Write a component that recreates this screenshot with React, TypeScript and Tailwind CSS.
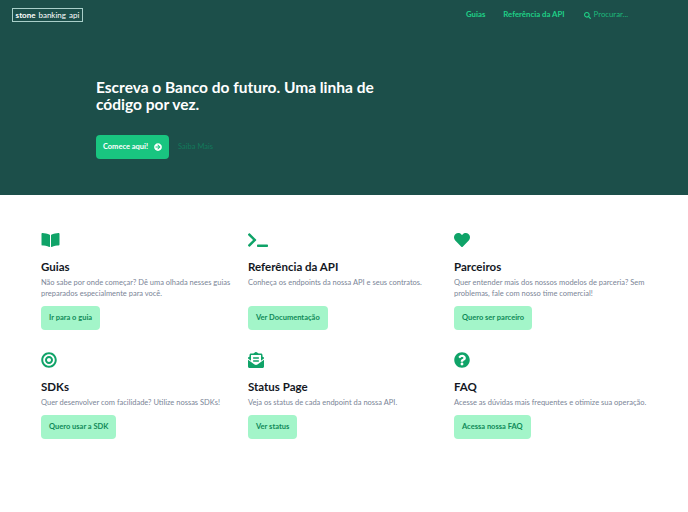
import {
  FaArrowCircleRight,
  FaBookOpen,
  FaBullseye,
  FaEnvelopeOpenText,
  FaHeart,
  FaQuestionCircle,
  FaSearch,
  FaTerminal,
} from "react-icons/fa";
import type { IconType } from "react-icons";

interface Card {
  icon: IconType;
  iconSize: string;
  title: string;
  text: string;
  action: string;
}

const topRow: Card[] = [
  {
    icon: FaBookOpen,
    iconSize: "w-[19px] h-[16px]",
    title: "Guias",
    text: "Não sabe por onde começar? Dê uma olhada nesses guias preparados especialmente para você.",
    action: "Ir para o guia",
  },
  {
    icon: FaTerminal,
    iconSize: "w-[20px] h-[16px]",
    title: "Referência da API",
    text: "Conheça os endpoints da nossa API e seus contratos.",
    action: "Ver Documentação",
  },
  {
    icon: FaHeart,
    iconSize: "w-[16px] h-[16px]",
    title: "Parceiros",
    text: "Quer entender mais dos nossos modelos de parceria? Sem problemas, fale com nosso time comercial!",
    action: "Quero ser parceiro",
  },
];

const bottomRow: Card[] = [
  {
    icon: FaBullseye,
    iconSize: "w-[16px] h-[16px]",
    title: "SDKs",
    text: "Quer desenvolver com facilidade? Utilize nossas SDKs!",
    action: "Quero usar a SDK",
  },
  {
    icon: FaEnvelopeOpenText,
    iconSize: "w-[16px] h-[16px]",
    title: "Status Page",
    text: "Veja os status de cada endpoint da nossa API.",
    action: "Ver status",
  },
  {
    icon: FaQuestionCircle,
    iconSize: "w-[16px] h-[16px]",
    title: "FAQ",
    text: "Acesse as dúvidas mais frequentes e otimize sua operação.",
    action: "Acessa nossa FAQ",
  },
];

function FeatureCard({ card, textHeight }: { card: Card; textHeight: string }) {
  const Icon = card.icon;
  return (
    <div className="flex flex-col items-start">
      <div className="h-[16px] flex items-center">
        <Icon className={`${card.iconSize} text-[#0fa368]`} />
      </div>
      <h3 className="mt-[10px] text-[11.5px] leading-[18px] font-bold text-[#14181f]">{card.title}</h3>
      <p className={`${textHeight} mt-[1px] w-[195px] text-[7.5px] leading-[11px] text-[#7b8597]`}>{card.text}</p>
      <a className="mt-[7px] h-[24px] px-[8px] flex items-center rounded-[4px] bg-[#a3f5c9] text-[7.5px] font-bold text-[#0f8a58]">
        {card.action}
      </a>
    </div>
  );
}

export default function App() {
  return (
    <div className="w-[688px] h-[512px] bg-white font-['Lato',sans-serif] antialiased overflow-hidden">
      <header className="h-[195px] bg-[#1c4f4a] flex flex-col">
        <nav className="h-[30px] pl-[12px] flex items-center">
          <div className="h-[14px] w-[71px] border border-[#a9cfc9] flex items-center justify-center gap-[3px] text-[8px] text-white">
            <span className="font-bold">stone</span>
            <span>banking</span>
            <span>api</span>
          </div>
          <a className="ml-[383px] text-[7.8px] font-bold text-[#1fd187]">Guias</a>
          <a className="ml-[18px] text-[7.8px] font-bold text-[#1fd187]">Referência da API</a>
          <div className="ml-[19px] flex items-center gap-[3px] text-[7.8px] text-[#1fd187]">
            <FaSearch className="w-[7px] h-[7px]" />
            <span className="opacity-80">Procurar...</span>
          </div>
        </nav>
        <div className="pl-[96px] mt-[49px]">
          <h1 className="w-[290px] text-[15.5px] leading-[17px] font-bold text-white">
            Escreva o Banco do futuro. Uma linha de código por vez.
          </h1>
          <div className="mt-[22px] flex items-center">
            <a className="h-[24px] w-[73px] rounded-[4px] bg-[#19c580] flex items-center justify-center gap-[6px] text-[7.5px] font-bold text-white">
              Comece aqui!
              <FaArrowCircleRight className="w-[8px] h-[8px]" />
            </a>
            <a className="ml-[9px] text-[7.5px] text-[#12795a]">Saiba Mais</a>
          </div>
        </div>
      </header>
      <main className="pt-[37px] pl-[41px]">
        <div className="grid grid-cols-[207px_206px_193px]">
          {topRow.map((card) => (
            <FeatureCard key={card.title} card={card} textHeight="h-[22px]" />
          ))}
        </div>
        <div className="mt-[22px] grid grid-cols-[207px_206px_193px]">
          {bottomRow.map((card) => (
            <FeatureCard key={card.title} card={card} textHeight="h-[11px]" />
          ))}
        </div>
      </main>
    </div>
  );
}
